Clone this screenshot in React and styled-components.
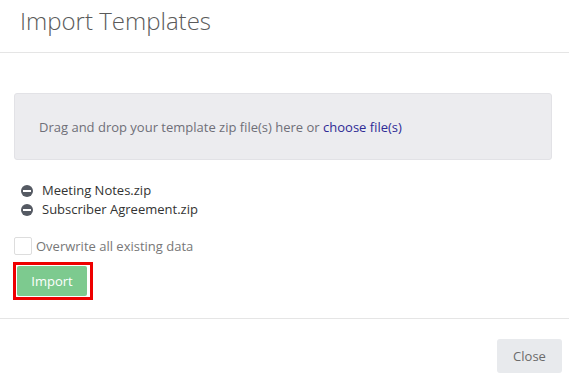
import React from 'react';
import styled, { createGlobalStyle } from 'styled-components';

const GlobalStyle = createGlobalStyle`
  html, body {
    margin: 0;
    padding: 0;
    background: #fff;
    font-family: "Open Sans", "Liberation Sans", sans-serif;
  }
`;

const Modal = styled.div`
  width: 569px;
  height: 380px;
  background: #fff;
  display: flex;
  flex-direction: column;
`;

const Header = styled.div`
  height: 53px;
  box-sizing: border-box;
  padding: 4px 20px 0;
  border-bottom: 1px solid #e5e5e5;
`;

const Title = styled.h1`
  margin: 0;
  font-size: 24px;
  font-weight: 300;
  color: #5a5a5a;
  line-height: 34px;
`;

const Body = styled.div`
  padding: 40px 17px 18px 14px;
  border-bottom: 1px solid #e5e5e5;
`;

const DropZone = styled.div`
  height: 67px;
  box-sizing: border-box;
  background: #ececef;
  border: 1px solid #e2e2e6;
  border-radius: 3px;
  display: flex;
  align-items: center;
  padding: 0 24px;
  font-size: 13px;
  color: #6f6f78;
`;

const Link = styled.a`
  color: #2e2a95;
  text-decoration: none;
  cursor: pointer;
`;

const FileList = styled.ul`
  list-style: none;
  margin: 21px 0 0;
  padding: 0 0 0 7px;
`;

const FileItem = styled.li`
  display: flex;
  align-items: center;
  gap: 9px;
  font-size: 13px;
  color: #333;
  line-height: 19px;
`;

const RemoveIcon = styled.span`
  width: 12px;
  height: 12px;
  border-radius: 50%;
  background: #555a63;
  display: inline-flex;
  align-items: center;
  justify-content: center;
  &::after {
    content: '';
    width: 8px;
    height: 2px;
    background: #fff;
  }
`;

const CheckRow = styled.label`
  display: flex;
  align-items: center;
  gap: 4px;
  margin-top: 18px;
  font-size: 13px;
  color: #777;
`;

const CheckBox = styled.span`
  width: 16px;
  height: 16px;
  border: 1px solid #ddd;
  border-radius: 2px;
  background: #fff;
`;

const Highlight = styled.div`
  display: inline-block;
  margin-top: 7px;
  border: 3px solid #ee0000;
  padding: 1px 3px 1px 1px;
  margin-left: -1px;
`;

const PrimaryButton = styled.button`
  display: block;
  width: 70px;
  height: 30px;
  border: none;
  border-radius: 2px;
  background: #7dca8f;
  color: #fff;
  font-family: inherit;
  font-size: 13px;
  font-weight: 500;
  cursor: pointer;
`;

const Footer = styled.div`
  flex: 1;
  display: flex;
  justify-content: flex-end;
  align-items: flex-start;
  padding: 20px 7px 0;
`;

const CloseButton = styled.button`
  width: 65px;
  height: 34px;
  border: none;
  border-radius: 3px;
  background: #e8eaed;
  color: #6b6b6b;
  font-family: inherit;
  font-size: 13px;
  cursor: pointer;
`;

const files = ['Meeting Notes.zip', 'Subscriber Agreement.zip'];

export default function App() {
  return (
    <>
      <GlobalStyle />
      <Modal>
        <Header>
          <Title>Import Templates</Title>
        </Header>
        <Body>
          <DropZone>
            Drag and drop your template zip file(s) here or&nbsp;<Link>choose file(s)</Link>
          </DropZone>
          <FileList>
            {files.map((f) => (
              <FileItem key={f}>
                <RemoveIcon />
                {f}
              </FileItem>
            ))}
          </FileList>
          <CheckRow>
            <CheckBox />
            Overwrite all existing data
          </CheckRow>
          <Highlight>
            <PrimaryButton>Import</PrimaryButton>
          </Highlight>
        </Body>
        <Footer>
          <CloseButton>Close</CloseButton>
        </Footer>
      </Modal>
    </>
  );
}
